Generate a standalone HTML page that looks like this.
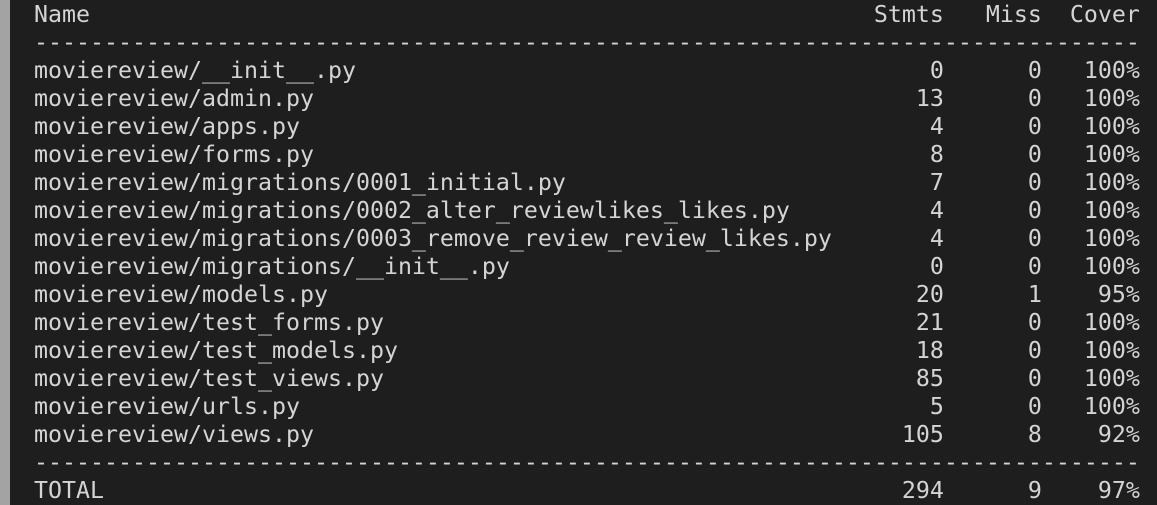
<!DOCTYPE html>
<html><head><meta charset="utf-8"><style>
html,body{margin:0;padding:0;width:1157px;height:505px;overflow:hidden;background:#1e1e1e;}
.bar{position:absolute;left:0;top:0;width:10px;height:505px;background:#a3a3a3;}
pre{position:absolute;left:34px;top:1px;margin:0;font-family:"DejaVu Sans Mono","Liberation Mono",monospace;font-size:23.25px;line-height:28px;color:#d4d4d4;letter-spacing:0;}
</style></head><body>
<div class="bar"></div>
<pre>Name                                                        Stmts   Miss  Cover
-------------------------------------------------------------------------------
moviereview/__init__.py                                         0      0   100%
moviereview/admin.py                                           13      0   100%
moviereview/apps.py                                             4      0   100%
moviereview/forms.py                                            8      0   100%
moviereview/migrations/0001_initial.py                          7      0   100%
moviereview/migrations/0002_alter_reviewlikes_likes.py          4      0   100%
moviereview/migrations/0003_remove_review_review_likes.py       4      0   100%
moviereview/migrations/__init__.py                              0      0   100%
moviereview/models.py                                          20      1    95%
moviereview/test_forms.py                                      21      0   100%
moviereview/test_models.py                                     18      0   100%
moviereview/test_views.py                                      85      0   100%
moviereview/urls.py                                             5      0   100%
moviereview/views.py                                          105      8    92%
-------------------------------------------------------------------------------
TOTAL                                                         294      9    97%</pre>
</body></html>
